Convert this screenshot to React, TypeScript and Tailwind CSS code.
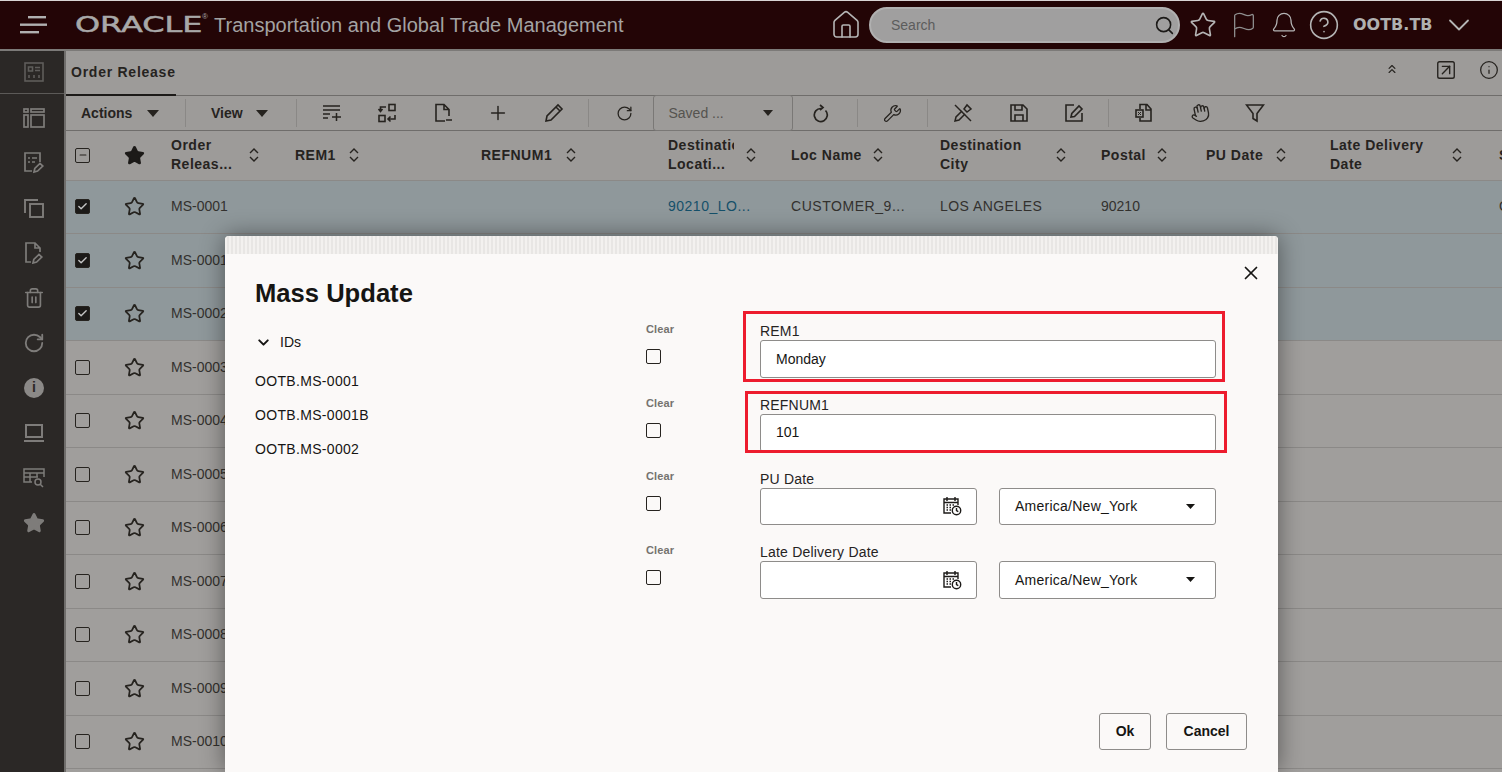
import React from "react";
import { Star, Search, Flag, Bell, ChevronDown, ChevronsUp, Info, Plus, RotateCw, Wrench, Hand, X, Trash2, Check, Minus, SquareArrowUpRight, House, CircleHelp } from "lucide-react";

const Sort = () => (
  <svg width="12" height="16" viewBox="0 0 12 16" fill="none" stroke="#26231f" strokeWidth="1.4" className="shrink-0">
    <path d="M2 6l4-4 4 4M2 10l4 4 4-4" />
  </svg>
);
const Caret = ({ c = "#26231f" }: { c?: string }) => (
  <svg width="12" height="7" viewBox="0 0 12 7" fill={c}><path d="M0 0h12L6 7z" /></svg>
);
const Box = ({ on, mixed }: { on?: boolean; mixed?: boolean }) => (
  <span className={`flex w-[15px] h-[15px] items-center justify-center rounded-[2px] border-[1.5px] border-[#26231f] ${on ? "bg-[#1c1a18]" : ""}`}>
    {on && <Check size={11} strokeWidth={3} color="#c4c4c4" />}
    {mixed && <Minus size={10} strokeWidth={2.5} color="#26231f" />}
  </span>
);

const ToolIcon = ({ children, w = "w-[55.5px]", ml = "" }: { children: React.ReactNode; w?: string; ml?: string }) => (
  <span className={`flex h-full items-center justify-center ${w} ${ml}`}>{children}</span>
);
const Div = ({ ml = "" }: { ml?: string }) => <span className={`w-px h-[28px] bg-[#8a8886] ${ml}`} />;

const SideIcon = ({ children }: { children: React.ReactNode }) => (
  <div className="flex h-[45px] items-center justify-center pl-[4px] text-[#7e7c7a]">{children}</div>
);

const Glyph = ({ children, w = 20, h = 20, sw = 1.5 }: { children: React.ReactNode; w?: number; h?: number; sw?: number }) => (
  <svg width={w} height={h} viewBox={`0 0 ${w} ${h}`} fill="none" stroke="currentColor" strokeWidth={sw} className="text-[#26231f]">{children}</svg>
);

const CalClock = () => (
  <svg width="20" height="20" viewBox="0 0 20 20" fill="none" stroke="#1c1a18" strokeWidth="1.4">
    <path d="M9 17H2V3h14v6" />
    <path d="M5 1v4M13 1v4M2 6.5h14" />
    <path d="M4.5 9h1.5M7.5 9H9M10.5 9H12M4.5 11.5h1.5M7.5 11.5H9M4.5 14h1.5M7.5 14H9" strokeWidth="1.5" />
    <circle cx="14.5" cy="14.5" r="4.2" fill="#fff" />
    <path d="M14.5 12v2.7l1.8 1" />
  </svg>
);

const cols = "grid-cols-[59px_46px_124px_186px_187px_123px_149px_161px_105px_124px_169px_100px]";

const Head = ({ a, b, w, mr = "" }: { a: string; b?: string; w: string; mr?: string }) => (
  <div className="flex items-center h-full">
    <div className={`${w} ${mr} overflow-hidden whitespace-nowrap text-[14px] leading-[19px] font-bold tracking-[0.5px] text-[#26231f]`}>
      <div>{a}</div>
      {b && <div>{b}</div>}
    </div>
    <Sort />
  </div>
);

const ids = ["MS-0001", "MS-0001B", "MS-0002", "MS-0003", "MS-0004", "MS-0005", "MS-0006", "MS-0007", "MS-0008", "MS-0009", "MS-0010", "MS-0011"];

const Row = ({ id, i }: { id: string; i: number }) => {
  const sel = i < 3;
  return (
    <div className={`grid ${cols} h-[53.5px] shrink-0 items-center border-b border-[#8b8987] text-[14px] text-[#33312e] ${sel ? "bg-[#8f989b]" : "bg-[#a09e9c]"}`}>
      <div className="pl-[9px]"><Box on={sel} /></div>
      <div className="-ml-[1px]"><Star size={21} strokeWidth={2} color="#26231f" /></div>
      <div>{id}</div>
      <div />
      <div />
      {i === 0 ? (
        <>
          <div className="tracking-[0.5px] text-[#15506a]">90210_LO...</div>
          <div className="tracking-[0.55px]">CUSTOMER_9...</div>
          <div className="tracking-[0.45px]">LOS ANGELES</div>
          <div>90210</div>
          <div />
          <div />
          <div>O</div>
        </>
      ) : null}
    </div>
  );
};

const Clear = () => (
  <div className="w-[114px] shrink-0">
    <div className="h-[18px] text-[11px] leading-[14px] font-bold tracking-[0.1px] text-[#75736f]">Clear</div>
    <div className="mt-[9px]"><Box /></div>
  </div>
);

const TextRow = ({ label, value }: { label: string; value: string }) => (
  <div className="flex h-[73.67px]">
    <Clear />
    <div className="w-[456px]">
      <div className="h-[18px] text-[14px] leading-[18px] tracking-[0.2px] text-[#26231f]">{label}</div>
      <div className="flex h-[38px] items-center rounded-[3px] border border-[#8e8c8a] bg-white pl-[15px] text-[14px] text-[#161513]">{value}</div>
    </div>
  </div>
);

const DateRow = ({ label, top = "", h = "h-[38px]" }: { label: string; top?: string; h?: string }) => (
  <div className="flex h-[73.67px]">
    <Clear />
    <div className={`w-[456px] ${top}`}>
      <div className="h-[18px] text-[14px] leading-[18px] tracking-[0.2px] text-[#26231f]">{label}</div>
      <div className="flex gap-[22px]">
        <div className={`flex ${h} w-[217px] items-center justify-end rounded-[3px] border border-[#8e8c8a] bg-white pr-[14px]`}>
          <CalClock />
        </div>
        <div className={`flex ${h} w-[217px] items-center justify-between rounded-[3px] border border-[#8e8c8a] bg-white pl-[15px] pr-[20px] text-[14px] tracking-[0.25px] text-[#161513]`}>
          <span className="pt-[1px]">America/New_York</span>
          <svg width="9" height="5" viewBox="0 0 9 5" fill="#161513"><path d="M0 0h9L4.5 5z" /></svg>
        </div>
      </div>
    </div>
  </div>
);

export default function App() {
  return (
    <div className="relative flex h-[772px] w-[1502px] flex-col overflow-hidden font-['Liberation_Sans',Arial,sans-serif] bg-[#9d9b99]">
      {/* top bar */}
      <header className="flex h-[51px] shrink-0 items-center border-t border-[#d9d4d4] border-b-2 border-b-[#7c7a78] bg-[#230506] text-[#a3a3a3]">
        <svg width="30" height="20" viewBox="0 0 30 20" className="ml-[19px]" fill="#b0b0b0">
          <rect x="9" y="1" width="18" height="2.4" />
          <rect x="1" y="8.5" width="27" height="2.4" />
          <rect x="1" y="16" width="19" height="2.4" />
        </svg>
        <div className="ml-[26px] flex w-[139px] items-start">
          <span className="origin-left scale-x-[1.45] text-[22px] leading-[24px] text-[#a8a8a8] font-['DejaVu_Sans',sans-serif] [-webkit-text-stroke:0.5px_#a8a8a8]">ORACLE</span>
          <span className="ml-[39px] -mt-[1px] text-[8px] leading-[10px] text-[#a8a8a8]">®</span>
        </div>
        <span className="text-[20px] leading-[26px] text-[#a3a3a3] whitespace-nowrap">Transportation and Global Trade Management</span>
        <div className="ml-auto flex items-center">
          <House size={32} strokeWidth={1.2} color="#b5b5b5" />
          <div className="ml-[7px] flex h-[36px] w-[311px] items-center justify-between rounded-[18px] border-2 border-[#b0b0b0] bg-[#a09f9f] pl-[20px] pr-[3px] text-[14px] text-[#5c5c5c]">
            Search
            <Search size={21} strokeWidth={1.8} color="#1c1a18" />
          </div>
          <Star className="ml-[9px]" size={28} strokeWidth={1.4} color="#b5b5b5" />
          <Flag className="ml-[13px]" size={28} strokeWidth={1.1} color="#8f8f8f" />
          <Bell className="ml-[12px]" size={28} strokeWidth={1.1} color="#b5b5b5" />
          <CircleHelp className="ml-[10px]" size={32} strokeWidth={1.2} color="#b5b5b5" />
          <span className="ml-[13px] w-[79px] whitespace-nowrap text-[16px] font-bold text-[#b0b0b0] font-['DejaVu_Sans',sans-serif] tracking-[0px]">OOTB.TB</span>
          <ChevronDown className="ml-[9px] mr-[25px]" size={36} strokeWidth={1.2} color="#b5b5b5" />
        </div>
      </header>

      <div className="flex min-h-0 flex-1">
        {/* sidebar */}
        <aside className="w-[66px] shrink-0 border-r-2 border-[#6f6d6b] bg-[#2b2826]">
          <div className="flex h-[43px] items-center justify-center border-b border-[#5c5a58] pl-[4px] text-[#5f5d5b]">
            <svg width="20" height="20" viewBox="0 0 20 20" fill="none" stroke="currentColor" strokeWidth="1.6"><rect x="1" y="1" width="18" height="18" /><path d="M4.5 5h4v4h-4zM11 5.5h5M11 8.5h5M5 13v3M10 13v3M15 13v3" /></svg>
          </div>
          <div className="pt-[1px]">
            <SideIcon>
              <svg width="22" height="20" viewBox="0 0 22 20" fill="none" stroke="currentColor" strokeWidth="1.7"><rect x="1" y="1" width="4" height="3" /><rect x="1" y="7" width="4" height="12" /><rect x="8" y="1" width="13" height="3" /><rect x="8" y="7" width="13" height="12" /></svg>
            </SideIcon>
            <SideIcon>
              <svg width="22" height="22" viewBox="0 0 22 22" fill="none" stroke="currentColor" strokeWidth="1.7"><path d="M9 19H2V1h15v9" /><path d="M5 6h2M9 6h5M5 10h2M9 10h3M11 20l.8-3.5 5.2-5 2.8 2.6-5.2 5z" /></svg>
            </SideIcon>
            <SideIcon>
              <svg width="22" height="20" viewBox="0 0 22 20" fill="none" stroke="currentColor" strokeWidth="1.9"><path d="M2 15V2h13" /><rect x="7" y="6" width="13" height="13" /></svg>
            </SideIcon>
            <SideIcon>
              <svg width="20" height="22" viewBox="0 0 20 22" fill="none" stroke="currentColor" strokeWidth="1.7"><path d="M7 20H2V1h9l5 5v4M11 1v5h5" /><path d="M9 21l.8-3.5 5.2-5 2.8 2.6-5.2 5z" /></svg>
            </SideIcon>
            <SideIcon><Trash2 size={22} strokeWidth={1.8} /></SideIcon>
            <SideIcon><RotateCw size={22} strokeWidth={2} /></SideIcon>
            <SideIcon>
              <span className="flex h-[20px] w-[20px] items-center justify-center rounded-full bg-[#8b8987] text-[14px] font-bold text-[#2b2826]">i</span>
            </SideIcon>
            <SideIcon>
              <svg width="22" height="20" viewBox="0 0 22 20" fill="none" stroke="currentColor" strokeWidth="2"><rect x="3" y="2" width="16" height="12" /><path d="M1 18h20" /></svg>
            </SideIcon>
            <SideIcon>
              <svg width="22" height="20" viewBox="0 0 22 20" fill="none" stroke="currentColor" strokeWidth="1.5"><path d="M9 14H1V1h20v8M1 5h20M1 9h14M7 5v9M14 5v4" /><circle cx="15" cy="14" r="3" /><path d="M17 16l3 3" /></svg>
            </SideIcon>
            <SideIcon><Star size={22} fill="currentColor" /></SideIcon>
          </div>
        </aside>

        <main className="flex min-w-0 flex-1 flex-col">
          {/* tab row */}
          <div className="flex h-[45px] shrink-0 border-b border-[#6f6d6b]">
            <div className="flex h-[45px] w-[110px] items-center whitespace-nowrap border-b-2 border-[#1c1a18] pl-[5px] text-[14px] font-bold tracking-[0.75px] text-[#26231f]">Order Release</div>
            <div className="ml-auto flex items-start pt-[8px]">
              <ChevronsUp size={14} strokeWidth={2} color="#26231f" className="mt-[3px]" />
              <SquareArrowUpRight className="ml-[36px]" size={22} strokeWidth={1.5} color="#26231f" />
              <Info className="ml-[22px] mr-[3px] mt-[1px]" size={20} strokeWidth={1.5} color="#26231f" />
            </div>
          </div>
          {/* toolbar */}
          <div className="flex h-[35px] shrink-0 items-center border-b border-[#6f6d6b] text-[14px] font-bold text-[#26231f]">
            <div className="flex h-full w-[119px] items-center pl-[15px]">Actions<span className="ml-[15px]"><Caret /></span></div>
            <Div />
            <div className="flex h-full w-[110px] items-center pl-[25px]">View<span className="ml-[13px]"><Caret /></span></div>
            <Div />
            <ToolIcon ml="ml-[7px]">
              <Glyph h={18}><path d="M1 2h17M1 6h17M1 10h7M1 14h5M10 13h9M14.5 9v8" /></Glyph>
            </ToolIcon>
            <ToolIcon>
              <Glyph sw={1.6}><rect x="12" y="1.5" width="6" height="6" /><rect x="2" y="12.5" width="6" height="6" /><path d="M9 4H3.5v4M1.5 6l2 2.5L5.5 6M18 12v4h-6.5M13.5 13.5l-2.5 2.5 2.5 2.5" /></Glyph>
            </ToolIcon>
            <ToolIcon>
              <Glyph sw={1.6}><path d="M12 18H3V1.5h8L16 6.5V13M11 1.5v5h5M13 17h6" /></Glyph>
            </ToolIcon>
            <ToolIcon><Plus size={22} strokeWidth={1.6} color="#26231f" /></ToolIcon>
            <ToolIcon>
              <Glyph sw={1.6}><path d="M2 18l1-5L14 2l4 4L7 17zM12 4l4 4" /></Glyph>
            </ToolIcon>
            <Div ml="ml-[6.5px]" />
            <ToolIcon w="w-[55px]" ml="ml-[7.5px]"><RotateCw size={17} strokeWidth={1.8} color="#26231f" /></ToolIcon>
            <div className="ml-[1px] flex h-[36px] w-[140px] items-center justify-between rounded-[3px] border border-[#7a7876] pl-[15px] pr-[19px] text-[14px] font-normal text-[#55534f]">
              Saved ...
              <svg width="10" height="6" viewBox="0 0 10 6" fill="#26231f"><path d="M0 0h10L5 6z" /></svg>
            </div>
            <ToolIcon ml="ml-[1px]">
              <Glyph sw={1.7}><path d="M9 2l3 2.5L9 7" /><path d="M11 4.5a6.5 6.5 0 1 0 4.5 2" transform="translate(-1 1)" /></Glyph>
            </ToolIcon>
            <Div ml="ml-[7.5px]" />
            <ToolIcon ml="ml-[7px]"><Wrench size={19} strokeWidth={1.6} color="#26231f" /></ToolIcon>
            <Div ml="ml-[6.5px]" />
            <ToolIcon ml="ml-[8px]">
              <Glyph><path d="M2 2l16 16" /><path d="M11 6l3-4 4 4-4 3zM9 8L3 14l-1 4 4-1 6-6" /></Glyph>
            </ToolIcon>
            <ToolIcon>
              <Glyph sw={1.6}><path d="M2 2h12l4 4v12H2zM6 2v5h7V2M6 18v-6h8v6" /></Glyph>
            </ToolIcon>
            <ToolIcon>
              <Glyph sw={1.6}><path d="M10 2H2v16h16v-8" /><path d="M7 14l.8-3.5L15 3l3 3-7.5 7.5z" /></Glyph>
            </ToolIcon>
            <Div ml="ml-[5.5px]" />
            <ToolIcon ml="ml-[8px]">
              <Glyph sw={1.6}><path d="M6 6V1.5h7L17 6v12H6v-3M12 1.5V7h5" /><rect x="2" y="7" width="7" height="7" /><path d="M4 9l3 3M7 9l-3 3" strokeWidth="1" /></Glyph>
            </ToolIcon>
            <ToolIcon><Hand size={20} strokeWidth={1.6} color="#26231f" className="-rotate-12" /></ToolIcon>
            <ToolIcon>
              <Glyph sw={1.6}><path d="M1.5 2h17L12 10.5V18l-4-2.5v-5z" /></Glyph>
            </ToolIcon>
          </div>
          {/* table head */}
          <div className={`grid ${cols} h-[49.5px] shrink-0 items-center border-b border-[#8b8987]`}>
            <div className="pl-[9px]"><Box mixed /></div>
            <div className="-ml-[1px]"><Star size={21} fill="#1c1a18" color="#1c1a18" /></div>
            <Head a="Order" b="Releas..." w="w-[77px]" />
            <Head a="REM1" w="w-[53px]" />
            <Head a="REFNUM1" w="w-[84px]" />
            <Head a="Destination" b="Locati..." w="w-[66px]" mr="mr-[11px]" />
            <Head a="Loc Name" w="w-[81px]" />
            <Head a="Destination" b="City" w="w-[115px]" />
            <Head a="Postal" w="w-[55px]" />
            <Head a="PU Date" w="w-[69px]" />
            <Head a="Late Delivery" b="Date" w="w-[121px]" />
            <div className="text-[14px] font-bold text-[#26231f]">S</div>
          </div>
          <div className="flex min-h-0 flex-1 flex-col overflow-hidden">
            {ids.map((id, i) => <Row key={id} id={id} i={i} />)}
          </div>
        </main>
      </div>

      {/* modal */}
      <div className="absolute left-[225px] top-[236px] flex h-[536px] w-[1053px] flex-col rounded-t-[4px] bg-[#fbf9f8] shadow-[0_0_24px_rgba(0,0,0,0.45)]">
        <div className="h-[18px] shrink-0 rounded-t-[4px] bg-[repeating-linear-gradient(90deg,#f3f1ef_0px,#f3f1ef_2px,#e8e6e4_2px,#e8e6e4_4px)]" />
        <button className="absolute right-[16px] top-[26px]"><X size={22} strokeWidth={1.9} color="#161513" /></button>
        <h1 className="mt-[25px] h-[28px] pl-[30px] text-[25.6px] font-bold leading-[28px] text-[#161513]">Mass Update</h1>
        <div className="mt-[15px] flex flex-1 min-h-0 pl-[30px]">
          <div className="w-[391px] shrink-0 pt-[10px] text-[14px] text-[#161513]">
            <div className="flex h-[20px] items-center gap-[8px]">
              <ChevronDown size={17} strokeWidth={2.8} color="#161513" />
              IDs
            </div>
            <div className="mt-[19px] flex flex-col gap-[14px] leading-[20px] tracking-[0.32px]">
              <div>OOTB.MS-0001</div>
              <div>OOTB.MS-0001B</div>
              <div>OOTB.MS-0002</div>
            </div>
          </div>
          <div className="relative">
            <TextRow label="REM1" value="Monday" />
            <TextRow label="REFNUM1" value="101" />
            <DateRow label="PU Date" top="pt-[0.5px]" h="h-[37px]" />
            <DateRow label="Late Delivery Date" />
            <div className="absolute left-[97px] top-[-11px] h-[71px] w-[482px] border-[3px] border-[#ed1c2e]" />
            <div className="absolute left-[99px] top-[69px] h-[62px] w-[482px] border-[3px] border-[#ed1c2e]" />
          </div>
        </div>
        <div className="flex justify-end gap-[15px] pb-[22px] pr-[31px]">
          <button className="h-[37px] w-[52px] rounded-[3px] border border-[#8e8c8a] text-[14px] font-bold text-[#161513]">Ok</button>
          <button className="h-[37px] w-[81px] rounded-[3px] border border-[#8e8c8a] text-[14px] font-bold text-[#161513]">Cancel</button>
        </div>
      </div>
    </div>
  );
}
